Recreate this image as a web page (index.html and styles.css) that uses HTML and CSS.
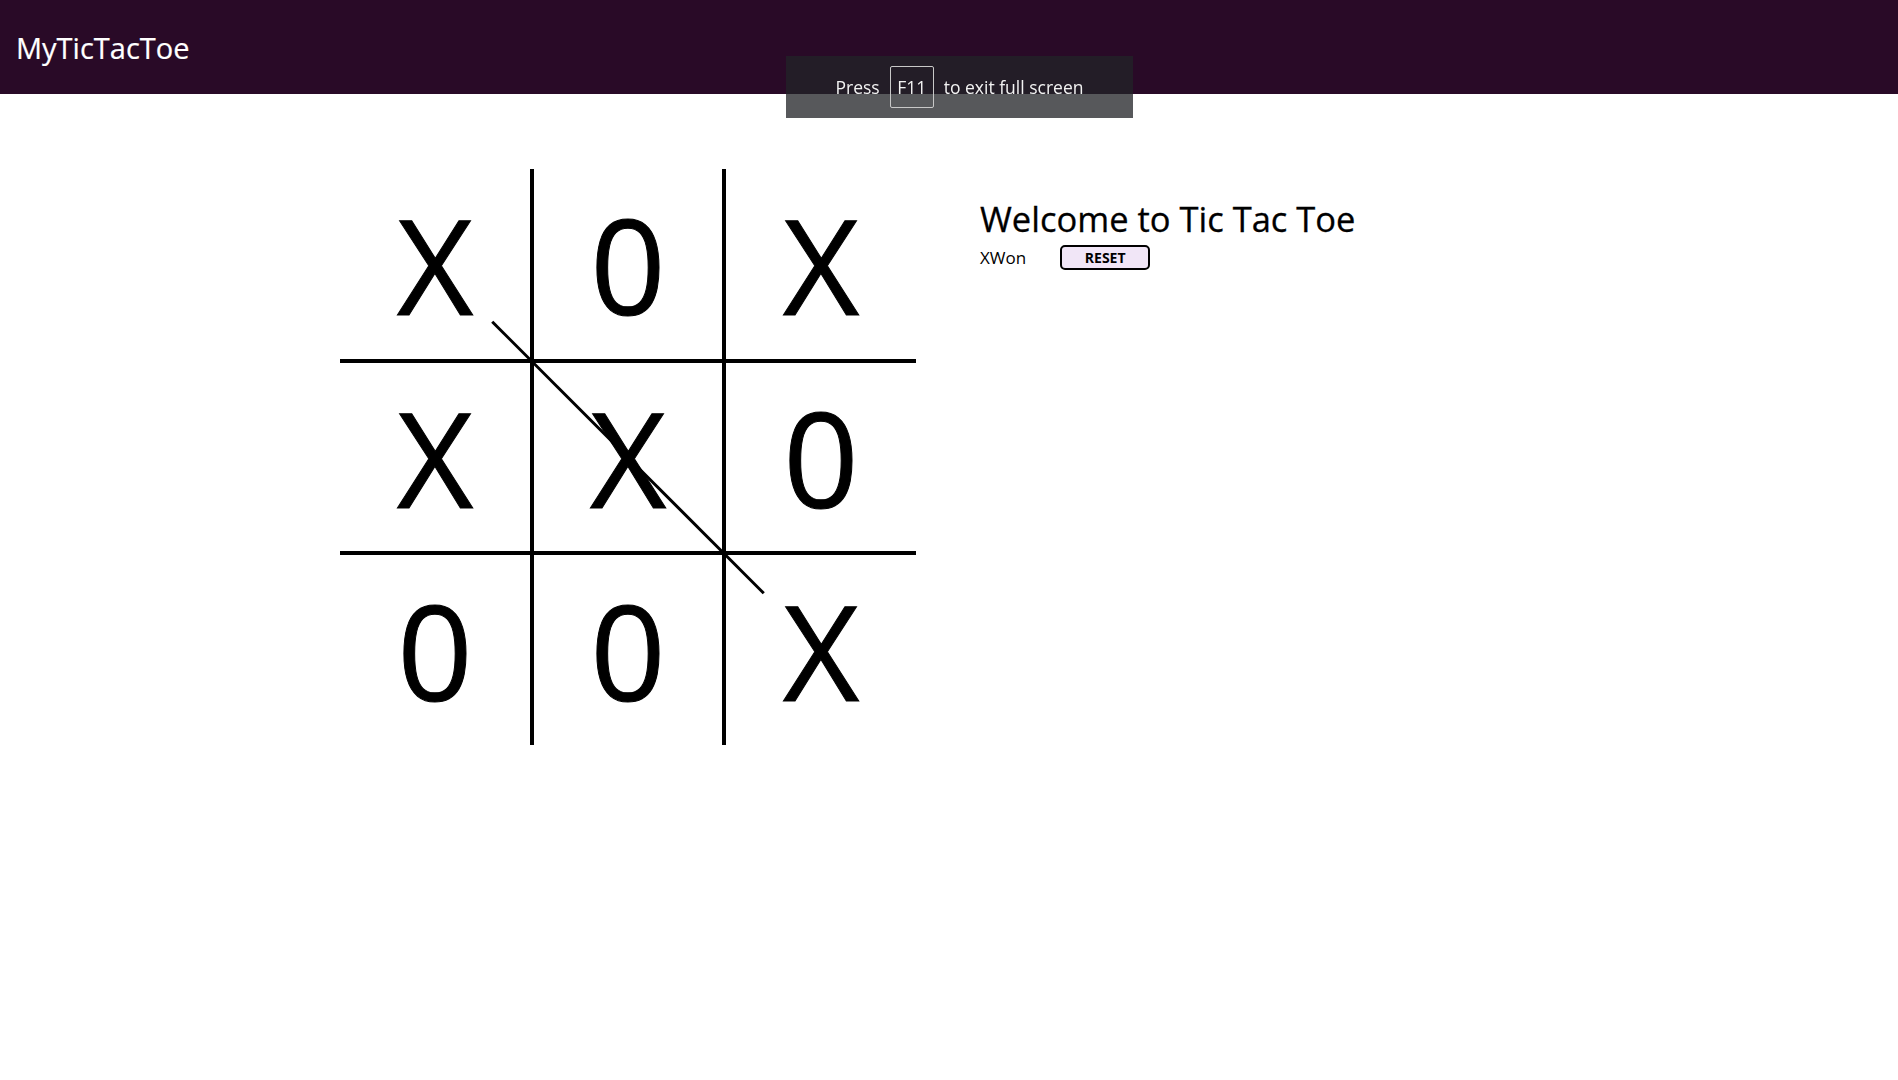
FILE: index.html
```html
<!DOCTYPE html>
<html lang="en">
<head>
<meta charset="utf-8">
<title>MyTicTacToe</title>
<link rel="stylesheet" href="styles.css">
</head>
<body>
<header class="topbar">
  <div class="brand">MyTicTacToe</div>
</header>
<main class="page">
  <section class="board">
    <div class="cell">X</div>
    <div class="cell">0</div>
    <div class="cell">X</div>
    <div class="cell">X</div>
    <div class="cell">X</div>
    <div class="cell">0</div>
    <div class="cell">0</div>
    <div class="cell">0</div>
    <div class="cell">X</div>
    <div class="strike"></div>
  </section>
  <section class="info">
    <h1 class="title">Welcome to Tic Tac Toe</h1>
    <div class="status-row">
      <span class="status">XWon</span>
      <button class="reset">RESET</button>
    </div>
  </section>
</main>
<div class="fs-notice">
  <span>Press</span>
  <span class="key">F11</span>
  <span>to exit full screen</span>
</div>
</body>
</html>
```
FILE: styles.css
```css
html, body {
  margin: 0;
  padding: 0;
  background: #ffffff;
  font-family: "Open Sans", "Noto Sans", sans-serif;
  color: #000;
}

.topbar {
  height: 94px;
  background: #290a27;
  display: flex;
  align-items: center;
  padding-left: 16px;
  box-sizing: border-box;
}

.brand {
  color: #ffffff;
  font-size: 29px;
  line-height: 1;
  -webkit-text-stroke: 0.2px #ffffff;
}

.page {
  display: flex;
  align-items: flex-start;
  padding-top: 75px;
  padding-left: 340px;
  gap: 64px;
}

.board {
  position: relative;
  display: grid;
  grid-template-columns: repeat(3, 192px);
  grid-template-rows: repeat(3, 192px);
}

.cell {
  box-sizing: border-box;
  display: flex;
  align-items: center;
  justify-content: center;
  font-size: 132px;
  line-height: 1;
  -webkit-text-stroke: 1px #000;
  border: 0 solid #000;
}

.cell:nth-child(3n+1),
.cell:nth-child(3n+2) { border-right-width: 2px; }
.cell:nth-child(3n+2),
.cell:nth-child(3n+3) { border-left-width: 2px; }
.cell:nth-child(-n+6) { border-bottom-width: 2px; }
.cell:nth-child(n+4):nth-child(-n+9) { border-top-width: 2px; }

.strike {
  position: absolute;
  left: 96px;
  top: 286.5px;
  width: 384px;
  height: 3px;
  background: #000;
  transform: rotate(45deg);
  transform-origin: center;
}

.info {
  padding-top: 29px;
}

.title {
  margin: 0;
  font-size: 34.5px;
  font-weight: 400;
  line-height: 41px;
  -webkit-text-stroke: 0.3px #000;
}

.status-row {
  display: flex;
  align-items: center;
  gap: 34px;
  margin-top: 6px;
}

.status {
  font-size: 17px;
}

.reset {
  width: 90px;
  height: 25px;
  box-sizing: border-box;
  border: 2px solid #000;
  border-radius: 5px;
  background: #f1e6f7;
  font-family: "Open Sans", "Noto Sans", sans-serif;
  font-weight: 700;
  font-size: 14px;
  line-height: 1;
  padding: 0;
  color: #000;
}

.fs-notice {
  position: fixed;
  left: 786px;
  top: 56px;
  width: 347px;
  height: 62px;
  background: rgba(34, 35, 40, 0.76);
  color: #f2f2f2;
  display: flex;
  align-items: center;
  justify-content: center;
  gap: 10px;
  font-size: 17.5px;
}

.key {
  width: 44px;
  height: 42px;
  box-sizing: border-box;
  border: 1px solid #c8c8c8;
  border-radius: 2px;
  display: flex;
  align-items: center;
  justify-content: center;
}
```
